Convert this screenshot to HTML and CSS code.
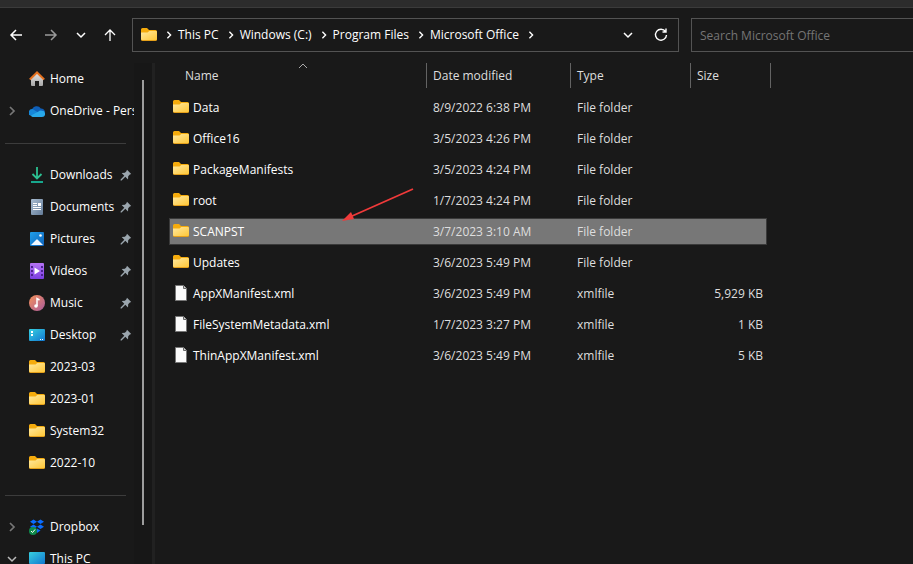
FILE: index.html
```
<!DOCTYPE html>
<html lang="en">
<head>
  <meta charset="UTF-8">
  <meta name="viewport" content="width=device-width, initial-scale=1.0">
  <title>Microsoft Office</title>
  <link rel="stylesheet" href="styles.css">
</head>
<body>

  <!-- shared icons -->
  <svg class="sprite" aria-hidden="true">
    <defs>
      <linearGradient id="gold" x1="0" y1="0" x2="1" y2="1">
        <stop offset="0" stop-color="#ffe9a0"/>
        <stop offset="1" stop-color="#ffc737"/>
      </linearGradient>
      <linearGradient id="teal" x1="0" y1="0" x2="1" y2="1">
        <stop offset="0" stop-color="#37d0e0"/>
        <stop offset="1" stop-color="#1277d0"/>
      </linearGradient>
      <linearGradient id="slate" x1="0" y1="0" x2="1" y2="1">
        <stop offset="0" stop-color="#a9bdd2"/>
        <stop offset="1" stop-color="#647c98"/>
      </linearGradient>
      <linearGradient id="blue" x1="0" y1="0" x2="1" y2="1">
        <stop offset="0" stop-color="#1f9fea"/>
        <stop offset="1" stop-color="#0f62ba"/>
      </linearGradient>
      <linearGradient id="violet" x1="0" y1="0" x2="0" y2="1">
        <stop offset="0" stop-color="#b673f5"/>
        <stop offset="1" stop-color="#7b3fe0"/>
      </linearGradient>
      <linearGradient id="coral" x1="0" y1="0" x2="1" y2="1">
        <stop offset="0" stop-color="#f5925a"/>
        <stop offset="1" stop-color="#a95a9c"/>
      </linearGradient>
      <linearGradient id="wall" x1="0" y1="0" x2="0" y2="1">
        <stop offset="0" stop-color="#e4e4e4"/>
        <stop offset="1" stop-color="#a8a8a8"/>
      </linearGradient>
    </defs>
    <symbol id="folder" viewBox="0 0 16 16">
      <path d="M0 2.500Q0 1 1.500 1H6l2 2h6.500Q16 3 16 4.500V8H0z" fill="#f5ab0c"/>
      <path d="M0 6h6.500l2-2H15q1 0 1 1v7.500q0 1.500-1.500 1.500h-13Q0 14 0 12.500z" fill="#e5a01a"/>
      <path d="M0 5.500h6.500L8.300 4H15q1 0 1 1v7q0 1-1 1H1q-1 0-1-1z" fill="url(#gold)"/>
    </symbol>
    <symbol id="file" viewBox="0 0 16 16">
      <path d="M2.500.5h8l3 3v12h-11z" fill="#fafafa" stroke="#777"/>
      <path d="M10.500.5v3h3" fill="#ccc" stroke="#666"/>
    </symbol>
    <symbol id="pin" viewBox="0 0 12 12">
      <path d="M7 .8 11.200 5l-1.400.6-1.600 1.600-.2 3.200-2.700-2.700L1.600 11.400.6 11.400v-1L4.300 6.700 1.700 4l3.200-.2L6.400 2.200z" fill="#9aa5ad"/>
    </symbol>
    <symbol id="chevron" viewBox="0 0 10 10">
      <path d="M3 1l4 4-4 4" fill="none" stroke="currentColor" stroke-width="1.700"/>
    </symbol>
    <symbol id="chevron-down" viewBox="0 0 10 10">
      <path d="M1 3l4 4 4-4" fill="none" stroke="currentColor" stroke-width="1.500"/>
    </symbol>
  </svg>

  <div class="tabstrip"></div>

  <header class="toolbar">
    <nav class="history" aria-label="History">
      <button type="button" aria-label="Back"><svg width="14" height="14" viewBox="0 0 14 14"><path d="M13 7H2M7 2 2 7l5 5" fill="none" stroke="currentColor" stroke-width="1.500"/></svg></button>
      <button type="button" class="dim" aria-label="Forward"><svg width="14" height="14" viewBox="0 0 14 14"><path d="M1 7h11M7 2l5 5-5 5" fill="none" stroke="currentColor" stroke-width="1.500"/></svg></button>
      <button type="button" class="recent" aria-label="Recent locations"><svg width="10" height="10"><use href="#chevron-down"/></svg></button>
      <button type="button" aria-label="Up"><svg width="14" height="14" viewBox="0 0 14 14"><path d="M7 13V2M2 7l5-5 5 5" fill="none" stroke="currentColor" stroke-width="1.300"/></svg></button>
    </nav>

    <div class="address">
      <svg class="icon" width="16" height="16"><use href="#folder"/></svg>
      <svg class="sep" width="8" height="8"><use href="#chevron"/></svg>
      <a href="#">This PC</a>
      <svg class="sep" width="8" height="8"><use href="#chevron"/></svg>
      <a href="#">Windows (C:)</a>
      <svg class="sep" width="8" height="8"><use href="#chevron"/></svg>
      <a href="#">Program Files</a>
      <svg class="sep" width="8" height="8"><use href="#chevron"/></svg>
      <a href="#">Microsoft Office</a>
      <svg class="sep" width="8" height="8"><use href="#chevron"/></svg>
      <div class="address__actions">
        <button type="button" aria-label="Previous locations"><svg width="10" height="10"><use href="#chevron-down"/></svg></button>
        <button type="button" aria-label="Refresh"><svg width="14" height="14" viewBox="0 0 14 14"><path d="M11.500 3.500A5.500 5.500 0 1 0 12.500 7M12 .5v3.500H8.500" fill="none" stroke="currentColor" stroke-width="1.400"/></svg></button>
      </div>
    </div>

    <input class="search" type="search" placeholder="Search Microsoft Office" aria-label="Search Microsoft Office">
  </header>

  <main class="explorer">
    <aside class="sidebar">
      <nav class="tree" aria-label="Folders">
        <a href="#" class="tree__item">
          <svg class="icon" width="16" height="16" viewBox="0 0 16 16"><path d="M2 7l6-5.500L14 7v7q0 1-1 1h-3v-5H6v5H3q-1 0-1-1z" fill="url(#wall)"/><path d="M.8 8.500 8 1.500l7.200 7" fill="none" stroke="#e5711f" stroke-width="2"/></svg>
          <span>Home</span>
        </a>
        <a href="#" class="tree__item">
          <svg class="toggle" width="10" height="10"><use href="#chevron"/></svg>
          <svg class="icon" width="16" height="16" viewBox="0 0 16 16"><path d="M3 7a4.800 4.800 0 0 1 8.800-1.500A4 4 0 0 1 16 9.500L8 12z" fill="#0f5fb8"/><path d="M3.500 6 10 10l-7 3A3.500 3.500 0 0 1 3.500 6z" fill="#1687d9"/><path d="M2 12.500 9.500 8.500q1.500-1.500 3.500-.7A3.100 3.100 0 0 1 13 14H4Q2.500 14 2 12.500z" fill="#28a8ea"/></svg>
          <span>OneDrive - Personal</span>
        </a>
        <hr>
        <a href="#" class="tree__item">
          <svg class="icon" width="16" height="16" viewBox="0 0 16 16"><path d="M8 0v11M3.500 7 8 11.500 12.500 7" fill="none" stroke="#2cc091" stroke-width="1.800"/><path d="M2 14h12v2H2z" fill="#17a78d"/></svg>
          <span>Downloads</span>
          <svg class="pin" width="12" height="12"><use href="#pin"/></svg>
        </a>
        <a href="#" class="tree__item">
          <svg class="icon" width="16" height="16" viewBox="0 0 16 16"><rect x="2" width="12" height="16" rx="1" fill="url(#slate)"/><path d="M4 4.500h4M4 6.500h4M4 8.500h8M4 10.500h8" stroke="#fff"/><path d="M9 4h3v3H9z" fill="#fff"/></svg>
          <span>Documents</span>
          <svg class="pin" width="12" height="12"><use href="#pin"/></svg>
        </a>
        <a href="#" class="tree__item">
          <svg class="icon" width="16" height="16" viewBox="0 0 16 16"><rect x="1" y="1" width="14" height="14" rx="1" fill="url(#blue)"/><path d="M2 14l5.500-5.500q.5-.5 1 0L14 14z" fill="#f2f8ff"/><circle cx="11.500" cy="4.500" r="1.300" fill="#fff"/></svg>
          <span>Pictures</span>
          <svg class="pin" width="12" height="12"><use href="#pin"/></svg>
        </a>
        <a href="#" class="tree__item">
          <svg class="icon" width="16" height="16" viewBox="0 0 16 16"><rect x="1" width="14" height="16" rx="1" fill="url(#violet)"/><path d="M2 3h2v2H2zm0 4h2v2H2zm0 4h2v2H2zM12 3h2v2h-2zm0 4h2v2h-2zm0 4h2v2h-2z" fill="#4c2391"/><path d="M5.500 4.500 11 8l-5.500 3.500z" fill="#fff"/></svg>
          <span>Videos</span>
          <svg class="pin" width="12" height="12"><use href="#pin"/></svg>
        </a>
        <a href="#" class="tree__item">
          <svg class="icon" width="16" height="16" viewBox="0 0 16 16"><circle cx="8" cy="8" r="8" fill="url(#coral)"/><circle cx="7" cy="11" r="1.800" fill="#fff"/><path d="M8 11V3.500l2.500 1.500" fill="none" stroke="#fff" stroke-width="1.500"/></svg>
          <span>Music</span>
          <svg class="pin" width="12" height="12"><use href="#pin"/></svg>
        </a>
        <a href="#" class="tree__item">
          <svg class="icon" width="16" height="16" viewBox="0 0 16 16"><rect y="2" width="16" height="12" rx="1" fill="url(#teal)"/><path d="M2 4h2v2H2zm0 3h2v2H2zM11 12h1v1h-1zm2 0h1v1h-1z" fill="#fff"/></svg>
          <span>Desktop</span>
          <svg class="pin" width="12" height="12"><use href="#pin"/></svg>
        </a>
        <a href="#" class="tree__item"><svg class="icon" width="16" height="16"><use href="#folder"/></svg><span>2023-03</span></a>
        <a href="#" class="tree__item"><svg class="icon" width="16" height="16"><use href="#folder"/></svg><span>2023-01</span></a>
        <a href="#" class="tree__item"><svg class="icon" width="16" height="16"><use href="#folder"/></svg><span>System32</span></a>
        <a href="#" class="tree__item"><svg class="icon" width="16" height="16"><use href="#folder"/></svg><span>2022-10</span></a>
        <hr>
        <a href="#" class="tree__item">
          <svg class="toggle" width="10" height="10"><use href="#chevron"/></svg>
          <svg class="icon" width="16" height="16" viewBox="0 0 16 16"><path d="M4.500.5 8 2.800 4.500 5 1 2.800zM11.500.5 15 2.800 11.500 5 8 2.800zM4.500 5.500 8 7.700 4.500 10 1 7.700zM11.500 5.500 15 7.700 11.500 10 8 7.700zM8 9.500l3.500 2L8 14z" fill="#0a6cff"/><circle cx="4" cy="12" r="4" fill="#0f8a4c"/><path d="M2 12l1.500 1.500L6 10.500" fill="none" stroke="#fff"/></svg>
          <span>Dropbox</span>
        </a>
        <a href="#" class="tree__item">
          <svg class="toggle toggle--open" width="10" height="10"><use href="#chevron-down"/></svg>
          <svg class="icon" width="16" height="16" viewBox="0 0 16 16"><rect y="1" width="16" height="12" rx="1" fill="url(#teal)"/></svg>
          <span>This PC</span>
        </a>
      </nav>
      <div class="scrollbar"><div class="scrollbar__thumb"></div></div>
    </aside>

    <section class="content">
      <table class="files">
        <thead>
          <tr>
            <th class="col-name" aria-sort="ascending"><button type="button">Name</button><svg class="sort" width="10" height="6" viewBox="0 0 10 6"><path d="M1 5l4-4 4 4" fill="none" stroke="#aaa"/></svg></th>
            <th class="col-date"><button type="button">Date modified</button></th>
            <th class="col-type"><button type="button">Type</button></th>
            <th class="col-size"><button type="button">Size</button></th>
          </tr>
        </thead>
        <tbody>
          <tr><td><svg class="icon" width="16" height="16"><use href="#folder"/></svg>Data</td><td>8/9/2022 6:38 PM</td><td>File folder</td><td></td></tr>
          <tr><td><svg class="icon" width="16" height="16"><use href="#folder"/></svg>Office16</td><td>3/5/2023 4:26 PM</td><td>File folder</td><td></td></tr>
          <tr><td><svg class="icon" width="16" height="16"><use href="#folder"/></svg>PackageManifests</td><td>3/5/2023 4:24 PM</td><td>File folder</td><td></td></tr>
          <tr><td><svg class="icon" width="16" height="16"><use href="#folder"/></svg>root</td><td>1/7/2023 4:24 PM</td><td>File folder</td><td></td></tr>
          <tr class="selected"><td><svg class="icon" width="16" height="16"><use href="#folder"/></svg>SCANPST</td><td>3/7/2023 3:10 AM</td><td>File folder</td><td></td></tr>
          <tr><td><svg class="icon" width="16" height="16"><use href="#folder"/></svg>Updates</td><td>3/6/2023 5:49 PM</td><td>File folder</td><td></td></tr>
          <tr><td><svg class="icon" width="16" height="16"><use href="#file"/></svg>AppXManifest.xml</td><td>3/6/2023 5:49 PM</td><td>xmlfile</td><td>5,929 KB</td></tr>
          <tr><td><svg class="icon" width="16" height="16"><use href="#file"/></svg>FileSystemMetadata.xml</td><td>1/7/2023 3:27 PM</td><td>xmlfile</td><td>1 KB</td></tr>
          <tr><td><svg class="icon" width="16" height="16"><use href="#file"/></svg>ThinAppXManifest.xml</td><td>3/6/2023 5:49 PM</td><td>xmlfile</td><td>5 KB</td></tr>
        </tbody>
      </table>

      <svg class="arrow" width="74" height="36" viewBox="0 0 74 36" aria-hidden="true">
        <path d="M72 2 10 29.500" stroke="#f03a3a" stroke-width="1.800" fill="none"/>
        <path d="M1 34l9-9 3 7z" fill="#f03a3a"/>
      </svg>
    </section>
  </main>

</body>
</html>
```
FILE: styles.css
```
:root {
  --bg: #191919;
  --line: #535353;
  --text: #fff;
  --text-soft: #dedede;
  --select: #777;
  --select-line: #3a3a3a;
}

* {
  box-sizing: border-box;
}

body {
  margin: 0;
  height: 100vh;
  display: flex;
  flex-direction: column;
  overflow: hidden;
  background-color: var(--bg);
  color: var(--text);
  font-family: "Open Sans", "Noto Sans", sans-serif;
  font-size: 12px;
  line-height: 16px;
}

a {
  color: inherit;
  text-decoration: none;
}

button {
  padding: 0;
  border: none;
  background: none;
  color: inherit;
  font: inherit;
}

svg {
  display: block;
  flex: none;
}

.sprite {
  position: absolute;
  width: 0;
  height: 0;
}

.tabstrip {
  flex: none;
  height: 8px;
  background-color: #2c2c2c;
  border-bottom: 1px solid #3b3b3b;
}

/* toolbar */
.toolbar {
  flex: none;
  display: flex;
  padding: 10px 0 11px;
}

.history {
  flex: none;
  display: flex;
  align-items: center;
  width: 132px;
  padding-left: 9px;
  gap: 21px;
}

.history .dim {
  color: #9a9a9a;
}

.history .recent {
  margin: 0 -4px 0 -3px;
}

.address {
  flex: 1;
  height: 34px;
  display: flex;
  align-items: center;
  padding: 0 10px 0 8px;
  border: 1px solid var(--line);
  white-space: nowrap;
}

.sep {
  margin: 0 5px 0 8px;
}

.address__actions {
  display: flex;
  align-items: center;
  gap: 21px;
  margin-left: auto;
}

.search {
  width: 222px;
  height: 34px;
  margin-left: 12px;
  padding: 0 8px;
  border: 1px solid var(--line);
  border-right: none;
  border-radius: 0;
  background: none;
  color: var(--text);
  font: inherit;
}

.search::placeholder {
  color: #757575;
}

/* sidebar */
.explorer {
  flex: 1;
  min-height: 0;
  display: flex;
}

.sidebar {
  flex: none;
  width: 155px;
  display: flex;
  overflow: hidden;
  border-right: 3px solid #212121;
}

.tree {
  width: 134px;
  overflow: hidden;
}

.tree__item {
  position: relative;
  display: flex;
  align-items: center;
  gap: 5px;
  height: 32px;
  padding-left: 29px;
  white-space: nowrap;
}

.toggle {
  position: absolute;
  left: 7px;
  color: #777;
}

.toggle--open {
  color: #bbb;
}

.pin {
  margin: 0 2px 0 auto;
}

.tree hr {
  height: 1px;
  margin: 16px 8px 15px 5px;
  border: none;
  background-color: #3c3c3c;
}

.scrollbar {
  flex: 1;
  padding: 17px 0 0 8px;
  background-color: #171717;
}

.scrollbar__thumb {
  width: 2px;
  height: 92%;
  max-height: 445px;
  background-color: #9d9d9d;
}

/* file list */
.content {
  position: relative;
  flex: 1;
  min-width: 0;
  padding-left: 14px;
}

.files {
  margin-top: -4px;
  border-collapse: separate;
  border-spacing: 0 4px;
  table-layout: fixed;
  width: 602px;
}

.files th {
  position: relative;
  height: 27px;
  padding: 0;
  vertical-align: top;
  font-weight: normal;
  color: var(--text-soft);
}

.files th button {
  display: block;
  width: 100%;
  height: 25px;
  padding-left: 6px;
  border-right: 1px solid #636363;
  text-align: left;
}

.files .col-name button {
  padding-left: 16px;
}

.col-name {
  width: 258px;
}

.col-date {
  width: 144px;
}

.col-type {
  width: 120px;
}

.col-size {
  width: 80px;
}

.sort {
  position: absolute;
  top: 0;
  left: 50%;
}

.files td {
  height: 27px;
  padding: 0 6px;
  color: var(--text-soft);
  white-space: nowrap;
}

.files td:first-child {
  padding-left: 4px;
  color: var(--text);
}

.files td:last-child {
  padding-right: 4px;
  border-right: 4px solid transparent;
  background-clip: padding-box;
  text-align: right;
}

.files td .icon {
  display: inline-block;
  margin-right: 4px;
  vertical-align: -3px;
}

.files .selected td {
  background-color: var(--select);
  box-shadow: inset 0 1px var(--select-line), inset 0 -1px var(--select-line);
}

.files .selected td:first-child {
  box-shadow: inset 1px 0 var(--select-line), inset 0 1px var(--select-line), inset 0 -1px var(--select-line);
}

.files .selected td:last-child {
  box-shadow: inset -1px 0 var(--select-line), inset 0 1px var(--select-line), inset 0 -1px var(--select-line);
}

/* points at the selected folder */
.arrow {
  position: absolute;
  top: 124px;
  left: 186px;
}
```
